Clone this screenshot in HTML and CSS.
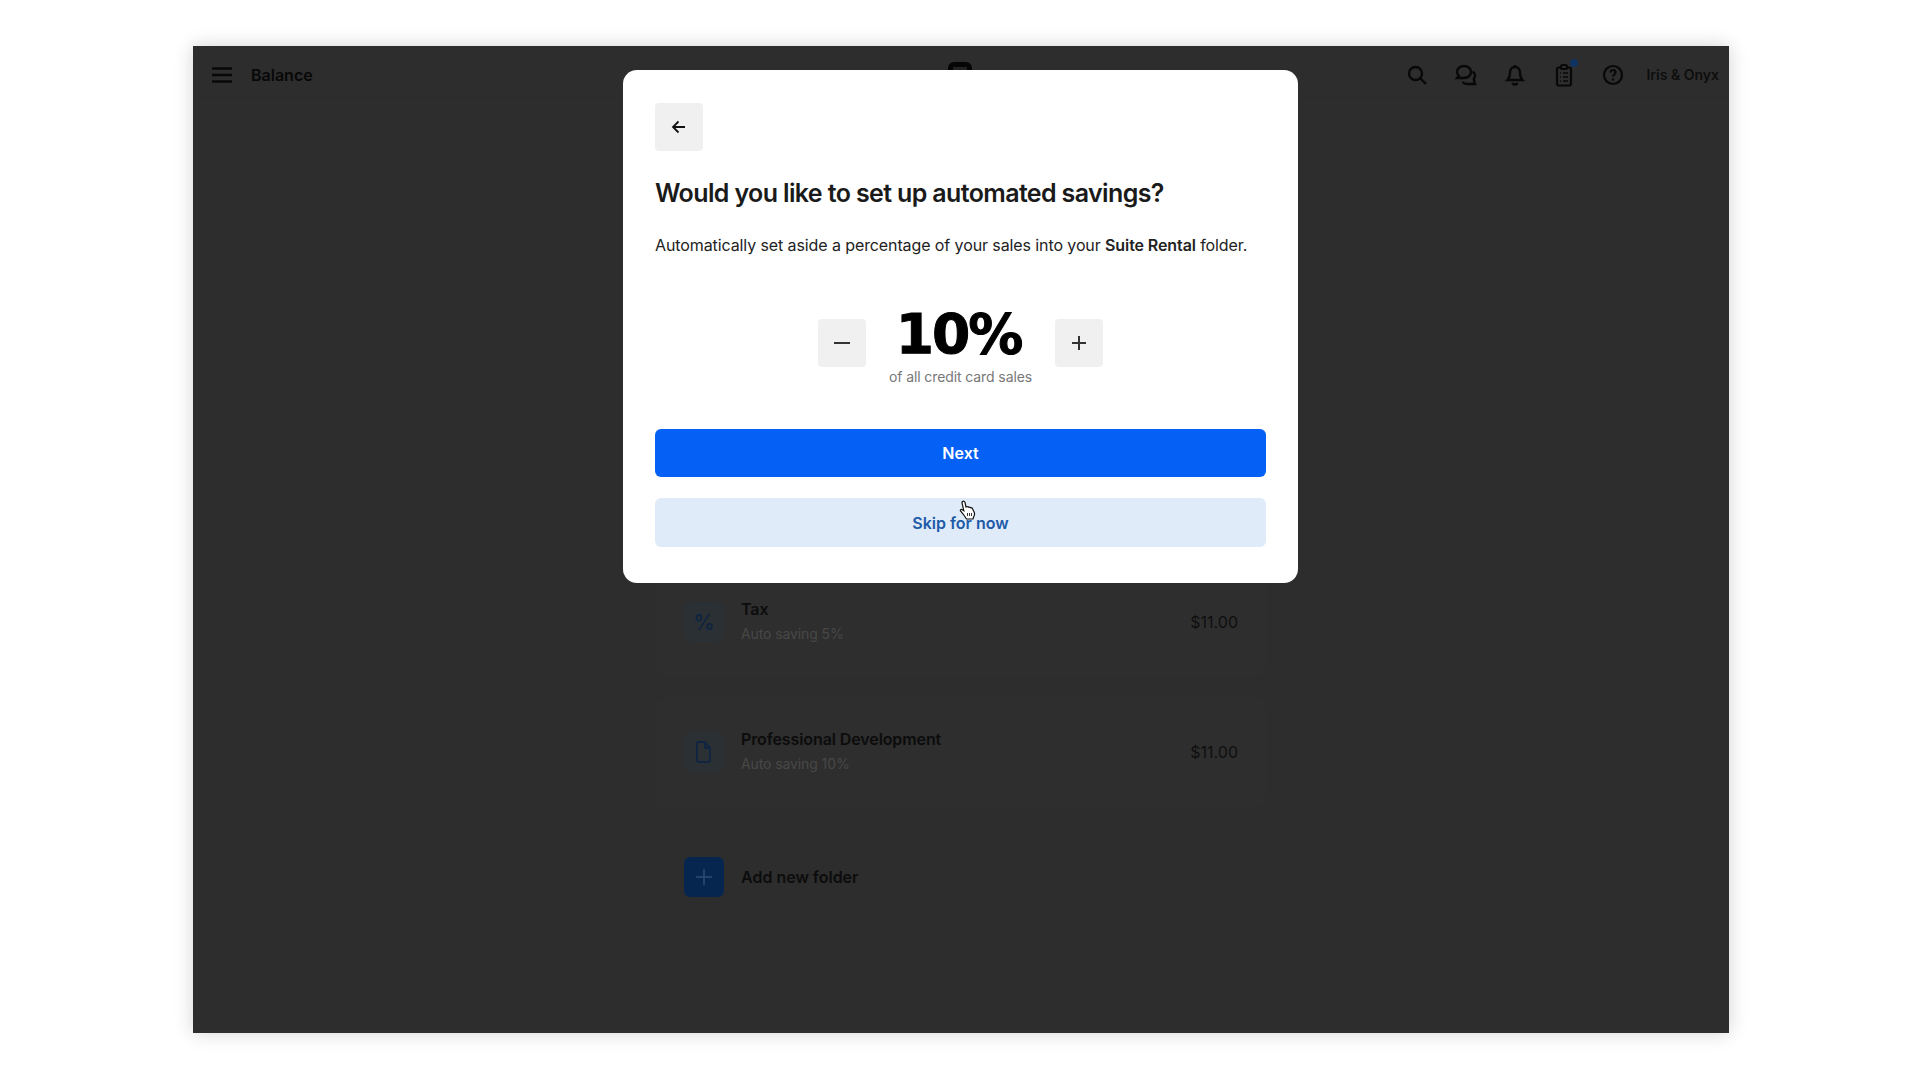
FILE: index.html
```html
<!DOCTYPE html>
<html lang="en">
<head>
  <meta charset="UTF-8">
  <meta name="viewport" content="width=device-width, initial-scale=1.0">
  <title>Balance</title>
  <link rel="stylesheet" href="styles.css">
</head>
<body>
  <div class="screen">
    <header class="topbar">
      <div class="topbar__left">
        <svg class="icon-menu" width="20" height="16" viewBox="0 0 20 16"><path d="M0 1.500h20M0 8h20M0 14.500h20" stroke="#080808" stroke-width="2.400"/></svg>
        <span class="topbar__title">Balance</span>
      </div>
      <div class="topbar__logo"></div>
      <div class="topbar__right">
        <svg width="24" height="24" viewBox="0 0 24 24" fill="none" stroke="#080808" stroke-width="2.400"><circle cx="10.500" cy="10.500" r="6.500"/><path d="M15.500 15.500l5.500 5.500"/></svg>
        <svg width="24" height="24" viewBox="0 0 24 24" fill="none" stroke="#080808" stroke-width="2.400"><path d="M10 3c4 0 7 2.600 7 6s-3 6-7 6H3l1.800-2.300C3.600 11.600 3 10.400 3 9c0-3.400 3-6 7-6z"/><path d="M18.500 8.500c1.800 1 2.500 2.500 2.500 4.200 0 1.300-.5 2.500-1.300 3.400L21 21h-8c-2 0-3.500-.8-4.500-2"/></svg>
        <svg width="24" height="24" viewBox="0 0 24 24" fill="none" stroke="#080808" stroke-width="2.400"><path d="M12 4c-3 0-5 2.300-5 5.500 0 4-1 6-2.500 7.500h15C18 15.500 17 13.500 17 9.500 17 6.300 15 4 12 4z"/><path d="M12 2v2M9.500 20c.4 1 1.300 1.500 2.500 1.500s2.100-.5 2.500-1.500"/></svg>
        <div class="icon-clip">
          <svg width="24" height="24" viewBox="0 0 24 24" fill="none" stroke="#080808" stroke-width="2.200"><rect x="5" y="4.500" width="14" height="18" rx="2"/><rect x="9" y="2" width="6" height="4" rx="1.500" fill="#2d2d2d"/><path d="M8 10h1M11 10h5M8 14h1M11 14h5M8 18h1M11 18h5" stroke-width="1.500"/></svg>
          <span class="icon-clip__dot"></span>
        </div>
        <svg width="24" height="24" viewBox="0 0 24 24" fill="none" stroke="#080808" stroke-width="2.200"><circle cx="12" cy="12" r="9"/><path d="M9.500 9.500c0-1.500 1.100-2.500 2.500-2.500s2.500 1 2.500 2.300c0 2.200-2.500 2.200-2.500 4.200"/><path d="M12 15.500v2"/></svg>
        <span class="topbar__user">Iris &amp; Onyx</span>
      </div>
    </header>

    <main class="main">
      <div class="folder">
        <div class="folder__icon"><span class="folder__pct">%</span></div>
        <div class="folder__info">
          <div class="folder__name">Tax</div>
          <div class="folder__sub">Auto saving 5%</div>
        </div>
        <div class="folder__amount">$11.00</div>
      </div>
      <div class="folder">
        <div class="folder__icon">
          <svg width="16" height="22" viewBox="0 0 16 22" fill="none" stroke="#10253f" stroke-width="2"><path d="M2 1h7l5 6v12a2 2 0 0 1-2 2H3a2 2 0 0 1-2-2V2z"/><path d="M9 1v6h5"/></svg>
        </div>
        <div class="folder__info">
          <div class="folder__name">Professional Development</div>
          <div class="folder__sub">Auto saving 10%</div>
        </div>
        <div class="folder__amount">$11.00</div>
      </div>
      <div class="add-folder">
        <div class="add-folder__icon">
          <svg width="16" height="16" viewBox="0 0 16 16"><path d="M8 0v16M0 8h16" stroke="#2b4d75" stroke-width="1.500"/></svg>
        </div>
        <span class="add-folder__text">Add new folder</span>
      </div>
    </main>

    <section class="modal">
      <button class="btn-square">
        <svg width="16" height="16" viewBox="0 0 16 16" fill="none" stroke="#111" stroke-width="1.800"><path d="M14 8H2M7.500 2.500L2 8l5.500 5.500"/></svg>
      </button>
      <h1 class="modal__title">Would you like to set up automated savings?</h1>
      <p class="modal__text">Automatically set aside a percentage of your sales into your <b>Suite Rental</b> folder.</p>
      <div class="stepper">
        <button class="btn-square stepper__btn">
          <svg width="16" height="16" viewBox="0 0 16 16"><path d="M0 8h16" stroke="#333" stroke-width="2"/></svg>
        </button>
        <div class="stepper__value">
          <div class="stepper__num">10%</div>
          <div class="stepper__sub">of all credit card sales</div>
        </div>
        <button class="btn-square stepper__btn">
          <svg width="16" height="16" viewBox="0 0 16 16"><path d="M8 1v14M1 8h14" stroke="#333" stroke-width="2"/></svg>
        </button>
      </div>
      <button class="btn btn--next">Next</button>
      <button class="btn btn--skip">Skip for now</button>
    </section>

    <svg class="cursor" width="18" height="20" viewBox="0 0 18 20"><path d="M3.500 1.500c1-.8 2.200-.3 2.500 1l1 4.500 1-.3c.7-.2 1.300 0 1.600.5.700-.3 1.400-.1 1.800.5.700-.3 1.500 0 1.900.6l2 4.200c.5 1.500.2 3-.6 4.300L14 19H7.500l-3-4.500-3-3.500c-.5-.8.3-1.800 1.300-1.500l2 1.200L3 3c-.1-.6.100-1.100.5-1.500z" fill="#fff" stroke="#111" stroke-width="1.200"/><path d="M8.500 13v3M10.500 13v3M12.500 13v3" stroke="#333" stroke-width="1"/></svg>
  </div>
</body>
</html>
```

FILE: styles.css
```css
* {
  box-sizing: border-box;
}
html, body {
  margin: 0;
  padding: 0;
}
body {
  background: #fff;
  font-family: "Inter", "Liberation Sans", sans-serif;
  padding: 46px 191px 47px 193px;
}
button {
  font-family: inherit;
  border: 0;
  cursor: pointer;
}

.screen {
  position: relative;
  height: 987px;
  background: #2d2d2d;
  box-shadow: 0 0 18px rgba(0, 0, 0, 0.18);
}

/* top bar */
.topbar {
  position: relative;
  height: 58px;
  padding: 0 10px 0 19px;
  display: flex;
  align-items: center;
  justify-content: space-between;
  border-bottom: 1px solid #2f2f2f;
}
.topbar__left {
  display: flex;
  align-items: center;
  gap: 19px;
}
.topbar__title {
  color: #080808;
  font-size: 16px;
  font-weight: 600;
}
.topbar__logo {
  position: absolute;
  left: 755px;
  top: 16px;
  width: 24px;
  height: 24px;
  border: 5px solid #050505;
  border-radius: 6px;
  background: #222;
}
.topbar__right {
  display: flex;
  align-items: center;
  gap: 25px;
}
.topbar__user {
  margin-left: -4px;
  color: #0e0e0e;
  font-size: 14px;
  font-weight: 600;
}
.icon-clip {
  position: relative;
  width: 24px;
  height: 24px;
}
.icon-clip__dot {
  position: absolute;
  top: -4px;
  right: -2px;
  width: 8px;
  height: 8px;
  border-radius: 50%;
  background: #0f3363;
}

/* list behind the modal */
.main {
  width: 610px;
  margin: 0 auto;
  padding-top: 463px;
  display: flex;
  flex-direction: column;
  gap: 20px;
}
.folder {
  height: 110px;
  padding: 0 28px;
  display: flex;
  align-items: center;
  gap: 17px;
  background: #2e2e2e;
  border-radius: 12px;
}
.folder__icon {
  width: 40px;
  height: 40px;
  flex: none;
  display: flex;
  align-items: center;
  justify-content: center;
  border-radius: 8px;
  background: #2b3034;
}
.folder__pct {
  color: #10253f;
  font-size: 21px;
  font-weight: 600;
}
.folder__info {
  flex: 1;
  padding-bottom: 3px;
}
.folder__name {
  color: #0c0c0c;
  font-size: 16px;
  font-weight: 600;
  line-height: 24px;
  letter-spacing: -0.1px;
}
.folder__sub {
  color: #484848;
  font-size: 14px;
  line-height: 20px;
  margin-top: 3px;
  letter-spacing: -0.1px;
}
.folder__amount {
  color: #0f0f0f;
  font-size: 16px;
  margin-bottom: 1px;
}
.add-folder {
  height: 100px;
  padding: 0 28px;
  display: flex;
  align-items: center;
  gap: 17px;
}
.add-folder__icon {
  width: 40px;
  height: 40px;
  display: flex;
  align-items: center;
  justify-content: center;
  border-radius: 6px;
  background: #06264f;
}
.add-folder__text {
  color: #0c0c0c;
  font-size: 16px;
  font-weight: 600;
}

/* modal */
.modal {
  position: absolute;
  left: 430px;
  top: 24px;
  width: 675px;
  padding: 33px 32px 36px 32px;
  background: #fff;
  border-radius: 14px;
}
.btn-square {
  width: 48px;
  height: 48px;
  padding: 0;
  display: flex;
  align-items: center;
  justify-content: center;
  background: #f0f0f0;
  border-radius: 4px;
}
.modal__title {
  margin: 26px 0 0;
  color: #1a1a1a;
  font-size: 25px;
  font-weight: 600;
  line-height: 32px;
  letter-spacing: -0.63px;
}
.modal__text {
  margin: 24px 0 0;
  color: #222;
  font-size: 16px;
  line-height: 24px;
  letter-spacing: -0.1px;
}
.modal__text b {
  font-weight: 600;
}
.stepper {
  margin-top: 49px;
  display: flex;
  justify-content: center;
}
.stepper__btn {
  margin-top: 13px;
}
.stepper__value {
  width: 189px;
  text-align: center;
}
.stepper__num {
  margin-left: -4px;
  padding-top: 2px;
  color: #000;
  font-family: "DejaVu Sans", sans-serif;
  font-size: 55px;
  font-weight: 700;
  line-height: 52px;
  letter-spacing: -2px;
  -webkit-text-stroke: 1px #000;
}
.stepper__sub {
  margin-top: 7px;
  color: #777;
  font-size: 14px;
  line-height: 20px;
  letter-spacing: -0.1px;
}
.btn {
  display: block;
  width: 100%;
  height: 48px;
  border-radius: 6px;
  font-size: 16px;
  font-weight: 600;
}
.btn--next {
  margin-top: 42px;
  background: #0560f5;
  color: #fff;
}
.btn--skip {
  margin-top: 21px;
  height: 49px;
  background: #e0ebfa;
  color: #1d5aa8;
}
.cursor {
  position: absolute;
  left: 766px;
  top: 454px;
}
```
